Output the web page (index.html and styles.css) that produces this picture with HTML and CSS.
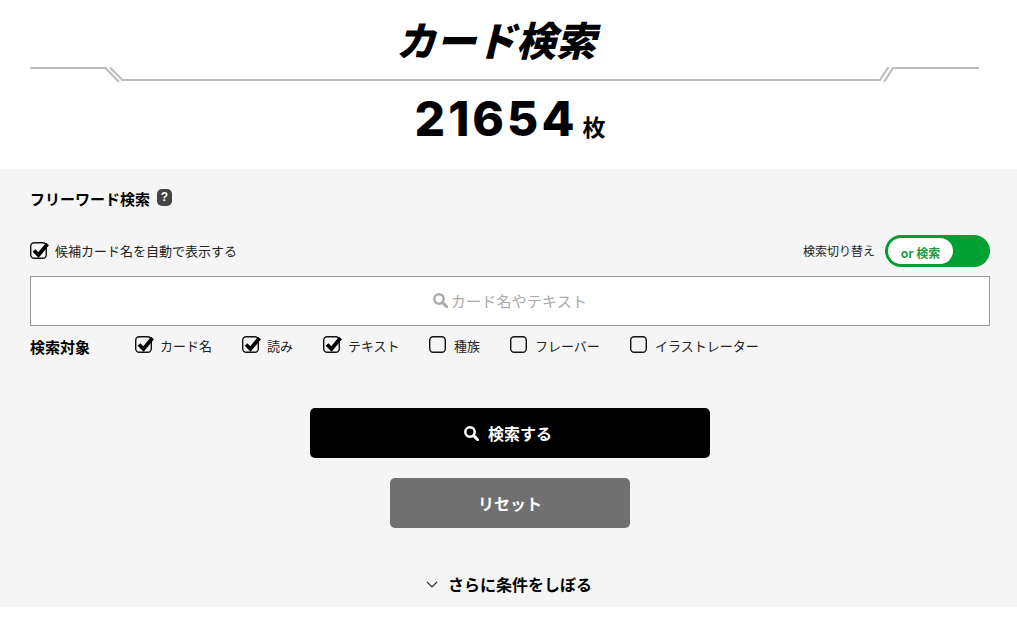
FILE: index.html
```html
<!DOCTYPE html>
<html lang="ja">
<head>
<meta charset="utf-8">
<title>カード検索</title>
<link rel="stylesheet" href="styles.css">
</head>
<body>
<svg class="defs" width="0" height="0" aria-hidden="true">
  <symbol id="box" viewBox="0 0 20 20"><rect x="0.7" y="0.7" width="15.6" height="15.6" rx="3.5" fill="none" stroke="#111" stroke-width="1.4"/></symbol>
  <symbol id="tick" viewBox="0 0 20 20"><path d="M4 8.500 8.500 13 17.500 2" fill="none" stroke="#000" stroke-width="3.8"/></symbol>
  <symbol id="glass" viewBox="0 0 16 16"><circle cx="6.400" cy="6.400" r="5" fill="none" stroke="currentColor" stroke-width="2.700"/><path d="M10.300 10.300 14.600 14.600" stroke="currentColor" stroke-width="3.200" stroke-linecap="round"/></symbol>
</svg>
<header class="head">
  <h1 class="title">カード検索</h1>
  <svg class="rule" viewBox="0 0 1017 20" width="1017" height="20" aria-hidden="true">
    <g fill="none" stroke="#bbb" stroke-width="2">
      <path d="M30 5H105.500L119 19"/>
      <path d="M110 4.500 122.500 17H880L888.500 4"/>
      <path d="M884 19 893 5H979"/>
    </g>
  </svg>
  <p class="count"><span class="num">21654</span><span class="unit">枚</span></p>
</header>
<main class="panel">
  <div class="free">
    <h2 class="free-title">フリーワード検索</h2>
    <span class="help">?</span>
  </div>
  <div class="options">
    <label class="check">
      <span class="mark"><svg><use href="#box"/></svg><svg><use href="#tick"/></svg></span>候補カード名を自動で表示する
    </label>
    <div class="switch">
      <span class="switch-label">検索切り替え</span>
      <span class="toggle"><span class="knob">or 検索</span></span>
    </div>
  </div>
  <div class="search">
    <svg class="search-icon"><use href="#glass"/></svg>
    <span>カード名やテキスト</span>
  </div>
  <div class="targets">
    <span class="targets-title">検索対象</span>
    <label class="check t1"><span class="mark"><svg><use href="#box"/></svg><svg><use href="#tick"/></svg></span>カード名</label>
    <label class="check t2"><span class="mark"><svg><use href="#box"/></svg><svg><use href="#tick"/></svg></span>読み</label>
    <label class="check t3"><span class="mark"><svg><use href="#box"/></svg><svg><use href="#tick"/></svg></span>テキスト</label>
    <label class="check t4"><span class="mark"><svg><use href="#box"/></svg></span>種族</label>
    <label class="check t5"><span class="mark"><svg><use href="#box"/></svg></span>フレーバー</label>
    <label class="check t6"><span class="mark"><svg><use href="#box"/></svg></span>イラストレーター</label>
  </div>
  <div class="actions">
    <button class="btn btn-search" type="button"><svg class="btn-icon"><use href="#glass"/></svg>検索する</button>
    <button class="btn btn-reset" type="button">リセット</button>
  </div>
  <div class="more">
    <svg class="chev" viewBox="0 0 12 7" width="12" height="7" aria-hidden="true"><path d="M1 1 6 6 11 1" fill="none" stroke="#333" stroke-width="1.200"/></svg>
    <span>さらに条件をしぼる</span>
  </div>
</main>
</body>
</html>
```
FILE: styles.css
```css
* { box-sizing: border-box; }
html, body { margin: 0; background: #fff; }
body {
  font-family: "Noto Sans CJK JP", "Noto Sans", sans-serif;
  color: #000;
  width: 1017px;
}
.defs { display: block; height: 0; }
.head { height: 169px; display: flex; flex-direction: column; align-items: stretch; }
.title {
  margin: 0;
  padding: 10px 25px 0 0;
  height: 61px;
  text-align: center;
  font-size: 40px;
  line-height: 58px;
  font-weight: 900;
  font-style: italic;
}
.rule { display: block; margin-top: 2px; flex: none; }
.count {
  margin: 0;
  padding-top: 8px;
  padding-left: 3px;
  display: flex;
  justify-content: center;
  align-items: baseline;
  line-height: 56px;
}
.num { font-family: Inter, sans-serif; font-size: 48px; font-weight: 800; letter-spacing: 3px; }
.unit { font-size: 23px; font-weight: 700; margin-left: 5px; }
.panel { background: #f5f5f5; height: 438px; padding: 20px 27px 10px 30px; }
.free { display: flex; align-items: center; height: 20px; gap: 7px; }
.free-title { margin: 0; font-size: 15px; line-height: 20px; font-weight: 700; }
.help {
  width: 15px; height: 17px; border-radius: 5px; background: #444; color: #fff;
  font-size: 12px; font-weight: 900; line-height: 17px; text-align: center;
  font-family: "Liberation Sans", sans-serif; margin-top: -3px;
}
.options { margin-top: 26px; height: 32px; display: flex; justify-content: space-between; align-items: center; }
.options .mark { margin-top: 2px; }
.check { display: flex; align-items: center; font-size: 13px; line-height: 20px; color: #222; }
.mark { position: relative; width: 20px; height: 20px; margin-right: 5px; flex: none; }
.mark svg { position: absolute; left: 0; top: 0; width: 20px; height: 20px; }
.switch { display: flex; align-items: center; gap: 10px; }
.switch-label { font-size: 12px; color: #222; padding-bottom: 2px; padding-left: 1px; }
.toggle { width: 105px; height: 32px; border-radius: 16px; background: #00a032; padding: 3px; display: block; }
.knob {
  display: block; width: 65px; height: 26px; border-radius: 13px; background: #fff;
  color: #1c9a40; font-size: 12px; font-weight: 700; line-height: 29px; text-align: center;
  white-space: nowrap;
}
.search {
  margin-top: 9px; height: 50px; background: #fff; border: 1px solid #999; padding: 0 0 2px 0;
  display: flex; align-items: center; justify-content: center; gap: 3px;
  color: #aaa; font-size: 15px; letter-spacing: 0.2px;
}
.search-icon { width: 15px; height: 15px; color: #aaa; }
.targets { margin-top: 10px; height: 20px; display: flex; align-items: center; }
.targets-title { font-size: 15px; font-weight: 700; width: 105px; }
.targets .check { padding-bottom: 1px; }
.targets .mark { margin-bottom: -1px; }
.t1 { width: 107px; }
.t2 { width: 81px; }
.t3 { width: 106px; }
.t4 { width: 81px; }
.t5 { width: 120px; }
.actions { margin-top: 52px; display: flex; flex-direction: column; align-items: center; gap: 20px; }
.btn {
  height: 50px; border: 0; border-radius: 5px; color: #fff; font: 700 16px/50px "Noto Sans CJK JP", sans-serif;
  display: flex; align-items: center; justify-content: center; padding: 0;
}
.btn-search { width: 400px; background: #000; gap: 9px; padding-right: 4px; }
.btn-reset { width: 240px; background: #707070; }
.btn-icon { width: 15px; height: 15px; color: #fff; }
.more { margin-top: 44px; height: 24px; display: flex; align-items: center; justify-content: center; gap: 10px; padding-right: 2px; font-size: 16px; font-weight: 700; line-height: 24px; }
.chev { margin-top: 1px; }
```
